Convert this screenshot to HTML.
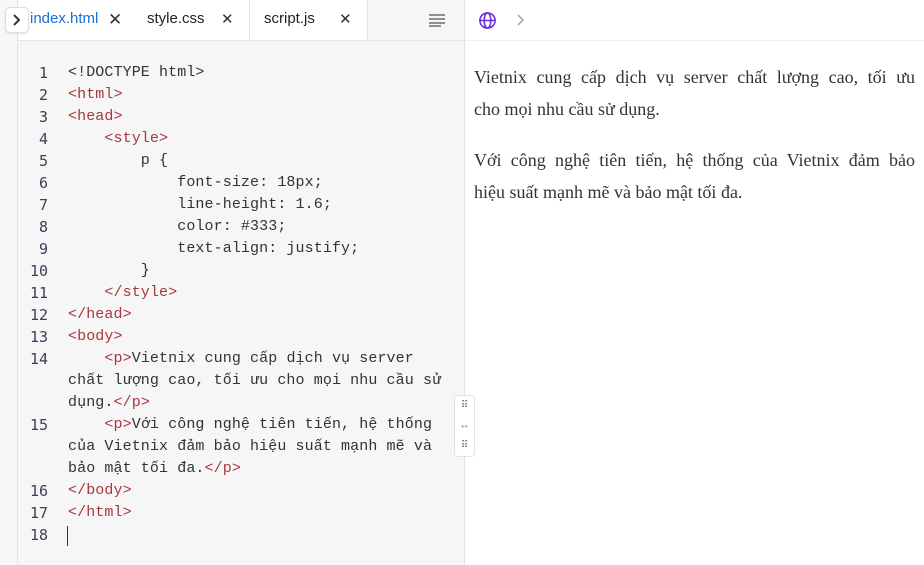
<!DOCTYPE html>
<html><head><meta charset="utf-8"><style>
body{margin:0;width:924px;height:565px;overflow:hidden;background:#fff;position:relative;font-family:"Liberation Sans",sans-serif}
#left{position:absolute;left:0;top:0;width:17px;height:565px;background:#f7f7f7;border-right:1px solid #e4e4e4}
#ed{position:absolute;left:18px;top:41px;width:446px;height:524px;background:#f6f6f6;border-right:1px solid #e2e2e2}
#tabs{position:absolute;left:18px;top:0;width:446px;height:40px;background:#f6f6f6;border-bottom:1px solid #e6e6e6;border-right:1px solid #e2e2e2}
.tab{position:absolute;top:0;height:40px;background:#fff;font-size:15px;color:#222;line-height:38px;border-right:1px solid #e6e6e6}
.x{position:absolute;top:0;font-size:17px;color:#333}
.ln{position:absolute;left:18px;width:30px;text-align:right;font-family:"DejaVu Sans Mono",monospace;font-size:15px;color:#3a3f55;height:22px;line-height:22px}
.c{position:absolute;left:68px;font-family:"Liberation Mono",monospace;font-size:15px;color:#333;white-space:pre;height:22px;line-height:22px;letter-spacing:0.1px}
.t{color:#a8363e}
#prev{position:absolute;left:474px;top:61px;width:441px;font-family:"Liberation Serif",serif;font-size:18px;line-height:32px;color:#333}
#prev p{margin:0 0 19px}
#prev .j{display:block;text-align:justify;text-align-last:justify}
</style></head><body>
<div id="left"></div>
<div id="tabs">
 <div class="tab" style="left:0;width:112px"><span style="position:absolute;left:12px;color:#1a6fd8">index.html</span><span class="x" style="left:90px;line-height:40px">✕</span></div>
 <div class="tab" style="left:112px;width:119px"><span style="position:absolute;left:17px">style.css</span><span class="x" style="left:91px;line-height:40px;font-size:15px">✕</span></div>
 <div class="tab" style="left:232px;width:117px"><span style="position:absolute;left:14px">script.js</span><span class="x" style="left:89px;line-height:40px;font-size:15px">✕</span></div>
 <svg style="position:absolute;left:410px;top:13px" width="18" height="14"><g stroke="#777" stroke-width="1.6"><line x1="1" y1="2" x2="17" y2="2"/><line x1="1" y1="6" x2="17" y2="6"/><line x1="1" y1="10" x2="17" y2="10"/><line x1="1" y1="13" x2="13" y2="13"/></g></svg>
</div>
<div style="position:absolute;left:5px;top:7px;width:22px;height:24px;background:#fff;border:1px solid #ddd;border-radius:5px;box-shadow:0 1px 2px rgba(0,0,0,.1)"><svg width="22" height="24"><path d="M8 7l5 5-5 5" fill="none" stroke="#333" stroke-width="2"/></svg></div>
<svg style="position:absolute;left:478px;top:11px" width="19" height="19" viewBox="0 0 20 20"><g fill="none" stroke="#6a35d8" stroke-width="1.7"><circle cx="10" cy="10" r="8"/><ellipse cx="10" cy="10" rx="3.5" ry="8"/><line x1="2" y1="10" x2="18" y2="10"/></g></svg>
<svg style="position:absolute;left:516px;top:13px" width="10" height="14"><path d="M2 2l5 5-5 5" fill="none" stroke="#999" stroke-width="1.4"/></svg>
<div style="position:absolute;left:465px;top:40px;width:459px;height:1px;background:#eee"></div>
<div id="ed"></div>
<div class="ln" style="top:62px">1</div><div class="c" style="top:62px">&lt;!DOCTYPE html&gt;</div>
<div class="ln" style="top:84px">2</div><div class="c t" style="top:84px">&lt;html&gt;</div>
<div class="ln" style="top:106px">3</div><div class="c t" style="top:106px">&lt;head&gt;</div>
<div class="ln" style="top:128px">4</div><div class="c t" style="top:128px">    &lt;style&gt;</div>
<div class="ln" style="top:150px">5</div><div class="c" style="top:150px">        p {</div>
<div class="ln" style="top:172px">6</div><div class="c" style="top:172px">            font-size: 18px;</div>
<div class="ln" style="top:194px">7</div><div class="c" style="top:194px">            line-height: 1.6;</div>
<div class="ln" style="top:216px">8</div><div class="c" style="top:216px">            color: #333;</div>
<div class="ln" style="top:238px">9</div><div class="c" style="top:238px">            text-align: justify;</div>
<div class="ln" style="top:260px">10</div><div class="c" style="top:260px">        }</div>
<div class="ln" style="top:282px">11</div><div class="c t" style="top:282px">    &lt;/style&gt;</div>
<div class="ln" style="top:304px">12</div><div class="c t" style="top:304px">&lt;/head&gt;</div>
<div class="ln" style="top:326px">13</div><div class="c t" style="top:326px">&lt;body&gt;</div>
<div class="ln" style="top:348px">14</div><div class="c" style="top:348px">    <span class="t">&lt;p&gt;</span>Vietnix cung cấp dịch vụ server</div>
<div class="c" style="top:370px">chất lượng cao, tối ưu cho mọi nhu cầu sử</div>
<div class="c" style="top:392px">dụng.<span class="t">&lt;/p&gt;</span></div>
<div class="ln" style="top:414px">15</div><div class="c" style="top:414px">    <span class="t">&lt;p&gt;</span>Với công nghệ tiên tiến, hệ thống</div>
<div class="c" style="top:436px">của Vietnix đảm bảo hiệu suất mạnh mẽ và</div>
<div class="c" style="top:458px">bảo mật tối đa.<span class="t">&lt;/p&gt;</span></div>
<div class="ln" style="top:480px">16</div><div class="c t" style="top:480px">&lt;/body&gt;</div>
<div class="ln" style="top:502px">17</div><div class="c t" style="top:502px">&lt;/html&gt;</div>
<div class="ln" style="top:524px">18</div><div style="position:absolute;left:67px;top:526px;width:1px;height:20px;background:#333"></div>
<div style="position:absolute;left:454px;top:395px;width:19px;height:60px;background:#fff;border:1px solid #e2e2e2;border-radius:4px;font-size:10px;color:#667;text-align:center;line-height:20px">⠿<br>↔<br>⠿</div>
<div id="prev"><p><span class="j">Vietnix cung cấp dịch vụ server chất lượng cao, tối ưu</span>cho mọi nhu cầu sử dụng.</p><p><span class="j">Với công nghệ tiên tiến, hệ thống của Vietnix đảm bảo</span>hiệu suất mạnh mẽ và bảo mật tối đa.</p></div>
</body></html>
